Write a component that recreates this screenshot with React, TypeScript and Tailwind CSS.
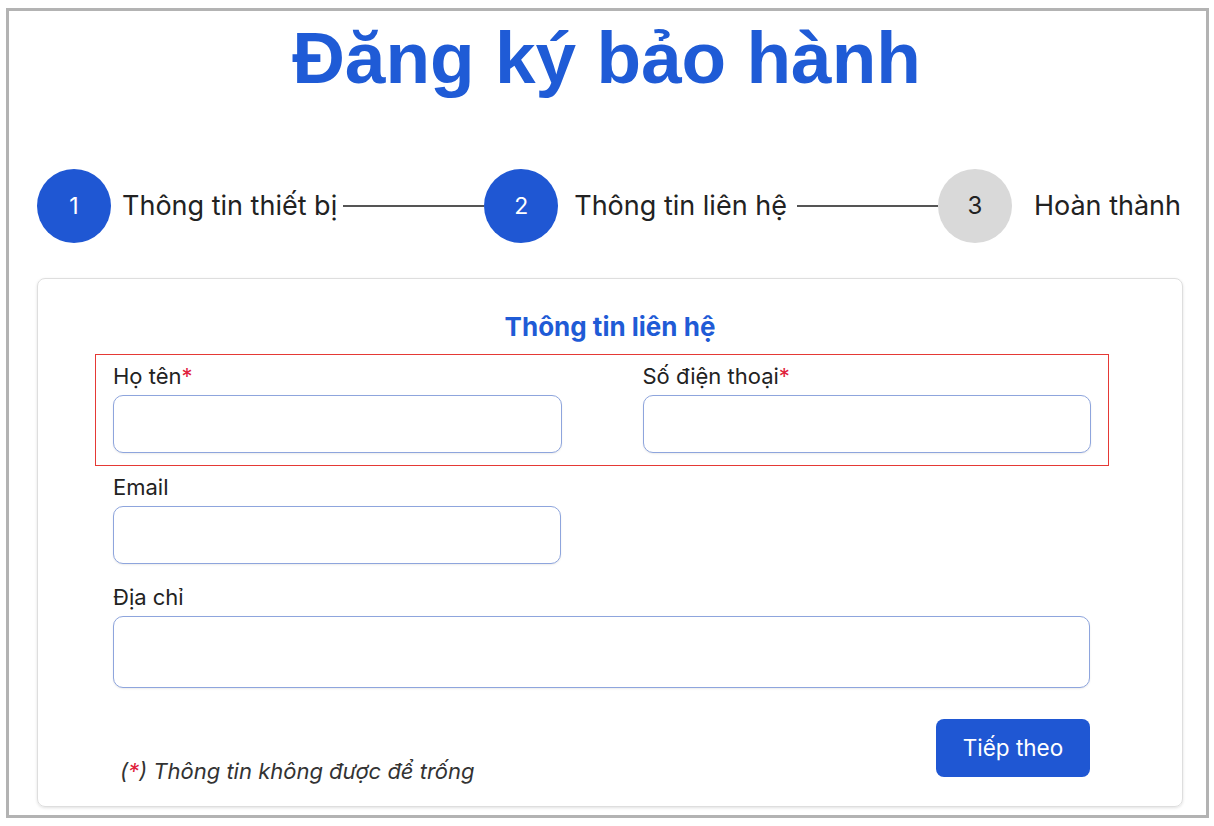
import React from 'react';

const body = { fontFamily: 'Inter, "Noto Sans", sans-serif' };
const head = { fontFamily: '"Liberation Sans", Arial, sans-serif' };

const Step = ({ n, label, active, gap }: { n: number; label: string; active: boolean; gap: string }) => (
  <div className="flex flex-row items-center shrink-0">
    <div
      className={
        active
          ? 'w-[74px] h-[74px] rounded-full flex items-center justify-center bg-[#1f57d3] text-white text-[23px]'
          : 'w-[74px] h-[74px] rounded-full flex items-center justify-center bg-[#d9d9d9] text-[#222] text-[24px]'
      }
    >
      {n}
    </div>
    <div className={'text-[27px] text-[#222] ' + gap}>{label}</div>
  </div>
);

const Field = ({ label, required, tall }: { label: string; required?: boolean; tall?: boolean }) => (
  <div className="flex flex-col">
    <div className="text-[22px] text-[#222] leading-[26px] mb-[6px]">
      {label}
      {required && <span className="text-[#e0203a]">*</span>}
    </div>
    <div
      className={
        tall
          ? 'w-full h-[72px] rounded-[10px] border-[1.5px] border-[#8ea5dd] bg-white shadow-[0_1px_2px_rgba(0,0,0,0.08)]'
          : 'w-full h-[58px] rounded-[10px] border-[1.5px] border-[#8ea5dd] bg-white shadow-[0_1px_2px_rgba(0,0,0,0.08)]'
      }
    />
  </div>
);

const App = () => {
  return (
    <div className="w-[1214px] h-[826px] bg-white pt-[8px] pl-[6px]" style={body}>
      <div className="w-[1203px] h-[810px] border-[3px] border-[#b3b3b3] flex flex-col">
        <div
          className="text-[73px] leading-none font-bold text-[#1f5bd6] text-center mt-[10px] pr-[2px]"
          style={head}
        >
          Đăng ký bảo hành
        </div>

        <div className="flex flex-row items-center mt-[75px] ml-[28px] mr-[25px]">
          <Step n={1} label="Thông tin thiết bị" active gap="ml-[11px]" />
          <div className="flex-1 h-[1.5px] bg-[#555] ml-[6px]" />
          <Step n={2} label="Thông tin liên hệ" active gap="ml-[16px]" />
          <div className="flex-1 h-[1.5px] bg-[#555] ml-[10px]" />
          <Step n={3} label="Hoàn thành" active={false} gap="ml-[22px]" />
        </div>

        <div className="mt-[35px] ml-[28px] mr-[23px] h-[529px] rounded-[8px] border border-[#dedede] shadow-[0_1px_3px_rgba(0,0,0,0.12)] flex flex-col">
          <div className="text-center text-[26px] font-bold text-[#1f5bd6] mt-[33px] leading-[30px]">
            Thông tin liên hệ
          </div>

          <div className="mt-[12px] ml-[57px] mr-[73px] border-[1.5px] border-[#e53935] px-[17px] pt-[8px] pb-[12px] grid grid-cols-2 gap-x-[81px]">
            <Field label="Họ tên" required />
            <Field label="Số điện thoại" required />
          </div>

          <div className="ml-[75px] mr-[92px] mt-[8px] grid grid-cols-2 gap-x-[81px]">
            <Field label="Email" />
          </div>

          <div className="ml-[75px] mr-[92px] mt-[20px]">
            <Field label="Địa chỉ" tall />
          </div>

          <div className="ml-[75px] mr-[92px] mt-[31px] flex flex-row items-end justify-between">
            <div className="italic text-[22px] text-[#333] ml-[7px] mb-[-11px]">
              (<span className="text-[#e0203a]">*</span>) Thông tin không được để trống
            </div>
            <button className="w-[154px] h-[58px] rounded-[8px] bg-[#1f57d3] text-white text-[22.5px]">
              Tiếp theo
            </button>
          </div>
        </div>
      </div>
    </div>
  );
};

export default App;
